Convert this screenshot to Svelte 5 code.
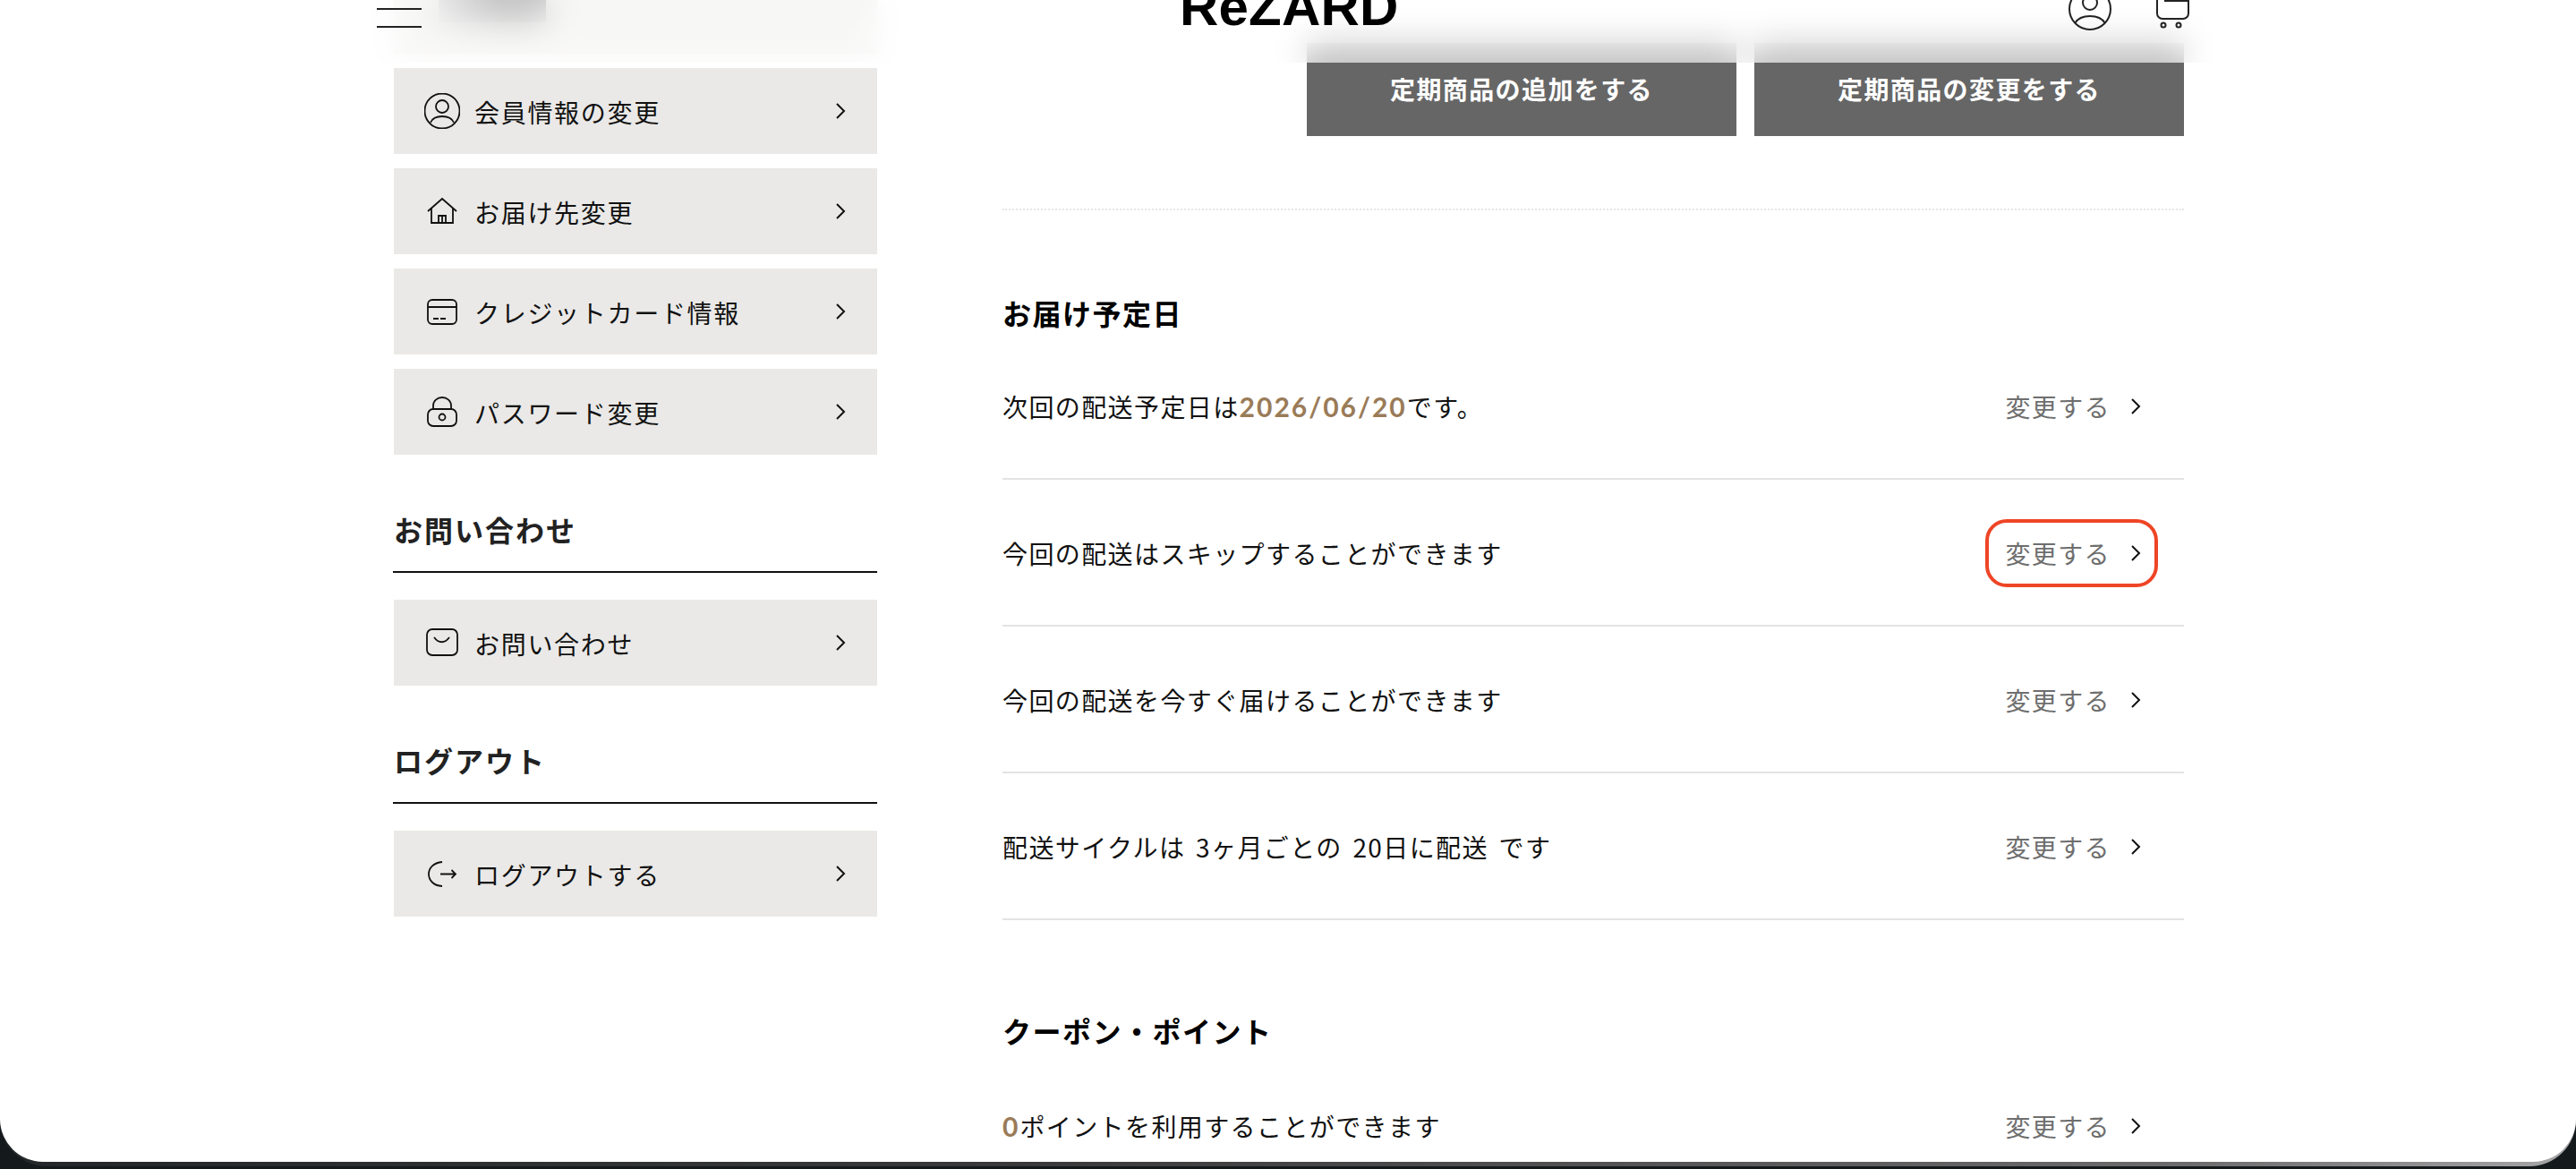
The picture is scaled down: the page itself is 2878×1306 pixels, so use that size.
<script>
  const account_items = [
    { label: '会員情報の変更', icon: 'user' },
    { label: 'お届け先変更', icon: 'home' },
    { label: 'クレジットカード情報', icon: 'card' },
    { label: 'パスワード変更', icon: 'lock' }
  ];

  const delivery_rows = [
    { label: '今回の配送はスキップすることができます', marked: true },
    { label: '今回の配送を今すぐ届けることができます' },
    { label: '配送サイクルは 3ヶ月ごとの 20日に配送 です' }
  ];
</script>

{#snippet chevron()}
  <svg class="chevron" viewBox="0 0 12 20" aria-hidden="true">
    <path d="M2 2l8 8-8 8" />
  </svg>
{/snippet}

{#snippet icon(name)}
  <svg class="icon" viewBox="0 0 40 40" aria-hidden="true">
    {#if name === 'user'}
      <circle cx="20" cy="20" r="19.500" />
      <circle cx="20" cy="15" r="7" />
      <path d="M7 33C9 28 14 26 20 26s11 2 13 7" />
    {:else if name === 'home'}
      <path d="M4 20L20 6l16 14" />
      <path d="M8 17v16h24V17" />
      <path d="M16 33v-8h8v8M20 25v9" />
    {:else if name === 'card'}
      <rect x="4" y="7" width="32" height="27" rx="5" />
      <path d="M4 15h32M10 28h6M18 28h6" />
    {:else if name === 'lock'}
      <rect x="4" y="17" width="32" height="19" rx="6" />
      <path d="M10 17v-4a10 9 0 0 1 20 0v4" />
      <circle cx="20" cy="26" r="3.500" />
    {:else if name === 'mail'}
      <rect x="3" y="5" width="34" height="29" rx="6" />
      <path d="M11 14c5 7 12 7 17 0" />
    {:else}
      <path d="M20 7C10 8 5 14 5 20.500s5 13 15 13.500" />
      <path d="M18 20.500h17M30.500 16l4.500 4.500-4.500 4.500" />
    {/if}
  </svg>
{/snippet}

{#snippet side_link(label, name)}
  <a class="side_link" href="#top">
    {@render icon(name)}
    <span class="side_label">{label}</span>
    {@render chevron()}
  </a>
{/snippet}

{#snippet change_link(marked)}
  <a class="change" class:marked href="#top">
    <span>変更する</span>
    {@render chevron()}
  </a>
{/snippet}

<div class="desk">
  <div class="rim">
    <div class="window">
      <header class="site_header">
        <div class="burger"><span></span><span></span></div>
        <div class="logo">ReZARD</div>
        <div class="header_icons">
          <svg class="head_user" viewBox="0 0 48 48" aria-hidden="true">
            <circle cx="24" cy="24" r="23" />
            <circle cx="24" cy="17" r="8" />
            <path d="M7 40c3-5 9-8 17-8s14 3 17 8" />
          </svg>
          <svg class="head_cart" viewBox="0 0 38 48" aria-hidden="true">
            <path d="M1 0v29a6 6 0 0 0 6 6h23a6 6 0 0 0 6-6V0" />
            <path d="M9 15h27" />
            <circle cx="8" cy="42" r="2.500" />
            <circle cx="25" cy="42" r="2.500" />
          </svg>
        </div>
      </header>

      <div class="columns">
        <aside class="sidebar">
          <div class="side_group">
            <div class="side_link ghost"><span class="ghost_text"></span></div>
            {#each account_items as item}
              {@render side_link(item.label, item.icon)}
            {/each}
          </div>

          <h2 class="side_title">お問い合わせ</h2>
          <div class="side_group">
            {@render side_link('お問い合わせ', 'mail')}
          </div>

          <h2 class="side_title">ログアウト</h2>
          <div class="side_group">
            {@render side_link('ログアウトする', 'logout')}
          </div>
        </aside>

        <main class="content">
          <div class="actions">
            <a class="action" href="#top">定期商品の追加をする</a>
            <a class="action" href="#top">定期商品の変更をする</a>
          </div>

          <section class="delivery">
            <h2 class="section_title">お届け予定日</h2>
            <div class="row first_row">
              <p>次回の配送予定日は<b class="accent">2026/06/20</b>です。</p>
              {@render change_link(false)}
            </div>
            {#each delivery_rows as row}
              <div class="row">
                <p>{row.label}</p>
                {@render change_link(row.marked)}
              </div>
            {/each}
          </section>

          <section class="coupon">
            <h2 class="section_title">クーポン・ポイント</h2>
            <div class="row last_row">
              <p><b class="accent">0</b>ポイントを利用することができます</p>
              {@render change_link(false)}
            </div>
          </section>
        </main>
      </div>
    </div>
  </div>
</div>

<style>
  :global(body) {
    margin: 0;
    background: #14191b;
    font-family: "Noto Sans CJK JP", "Noto Sans", sans-serif;
    color: #111;
  }

  a {
    color: inherit;
    text-decoration: none;
  }

  .desk {
    height: 1306px;
    overflow: hidden;
  }

  .rim {
    height: 1303px;
    border-radius: 0 0 52px 52px;
    background: linear-gradient(90deg, #23272a 0%, #3a3a3a 40%, #6c6c6c 85%, #a8a8a8 100%);
  }

  .window {
    position: relative;
    height: 1298px;
    overflow: hidden;
    background: #fff;
    border-radius: 0 0 48px 48px;
  }

  .site_header {
    position: absolute;
    z-index: 2;
    top: 0;
    left: 0;
    right: 0;
    height: 70px;
    overflow: hidden;
    background: rgba(255, 255, 255, 0.62);
    backdrop-filter: blur(18px);
  }

  .burger {
    position: absolute;
    left: 421px;
    top: 9px;
    width: 50px;
    height: 22px;
    display: flex;
    flex-direction: column;
    justify-content: space-between;
  }

  .burger span {
    height: 2px;
    background: #222;
  }

  .logo {
    position: absolute;
    left: 1318px;
    top: -32px;
    font: 700 60px/80px "Liberation Sans", sans-serif;
    letter-spacing: 0.2px;
    color: #000;
  }

  .header_icons {
    position: absolute;
    left: 2311px;
    top: -14px;
    display: flex;
    gap: 50px;
  }

  .header_icons svg {
    fill: none;
    stroke: #222;
    stroke-width: 2;
  }

  .head_user {
    width: 48px;
    height: 48px;
  }

  .head_cart {
    width: 38px;
    height: 48px;
  }

  .columns {
    display: flex;
    padding-left: 440px;
    margin-top: -36px;
  }

  .sidebar {
    width: 540px;
    flex: none;
  }

  .side_group {
    display: flex;
    flex-direction: column;
    gap: 16px;
  }

  .side_link {
    display: flex;
    align-items: center;
    height: 96px;
    padding: 0 35px 0 34px;
    box-sizing: border-box;
    background: #eae9e7;
    font-size: 28px;
    letter-spacing: 1.7px;
    color: #111;
  }

  .ghost_text {
    display: block;
    width: 120px;
    height: 26px;
    margin-left: 16px;
    background: linear-gradient(90deg, #bbb, #666 55%, #666);
  }

  .side_label {
    flex: 1;
    margin-left: 16px;
    margin-top: 2px;
  }

  .icon {
    width: 40px;
    height: 40px;
    flex: none;
    fill: none;
    stroke: #111;
    stroke-width: 1.800;
  }

  .chevron {
    width: 12px;
    height: 20px;
    flex: none;
    fill: none;
    stroke: #111;
    stroke-width: 2;
  }

  .side_title {
    margin: 0 0 30px -1px;
    padding: 59px 0 23px 1px;
    border-bottom: 2px solid #111;
    font-size: 32px;
    line-height: 48px;
    font-weight: 700;
    letter-spacing: 2px;
    color: #222;
  }

  .content {
    width: 1320px;
    margin-left: 140px;
    flex: none;
  }

  .actions {
    display: flex;
    justify-content: flex-end;
    gap: 20px;
    padding-top: 84px;
    padding-bottom: 81px;
    border-bottom: 2px dotted #e6e6e6;
  }

  .action {
    width: 480px;
    height: 104px;
    box-sizing: border-box;
    padding-bottom: 3px;
    display: flex;
    align-items: center;
    justify-content: center;
    background: #666;
    color: #fff;
    font-size: 28px;
    font-weight: 700;
    letter-spacing: 1.4px;
  }

  .delivery {
    padding-top: 90px;
  }

  .section_title {
    margin: 0;
    font-size: 32px;
    line-height: 48px;
    font-weight: 700;
    letter-spacing: 1.500px;
    color: #000;
  }

  .row {
    display: flex;
    align-items: center;
    justify-content: space-between;
    height: 164px;
    padding-top: 2px;
    box-sizing: border-box;
    border-bottom: 2px solid #e3e3e3;
  }

  .first_row {
    margin-top: -1px;
  }

  .row p {
    margin: 0;
    font-size: 28px;
    letter-spacing: 1.4px;
    word-spacing: 4px;
    color: #111;
  }

  .accent {
    font-family: Lato, "Noto Sans", sans-serif;
    font-size: 30px;
    letter-spacing: 2px;
    color: #9a7b58;
    font-weight: 700;
  }

  .change {
    display: flex;
    align-items: center;
    gap: 22px;
    margin-right: 29px;
    padding: 14px 15px 14px 18px;
    color: #6e6e6e;
    font-size: 28px;
    letter-spacing: 1.4px;
    border: 4px solid transparent;
    border-radius: 24px;
  }

  .marked {
    border-color: #ee4526;
  }

  .coupon {
    padding-top: 99px;
  }

  .last_row {
    border-bottom: 0;
    margin-top: 1px;
    padding-top: 0;
  }
</style>
